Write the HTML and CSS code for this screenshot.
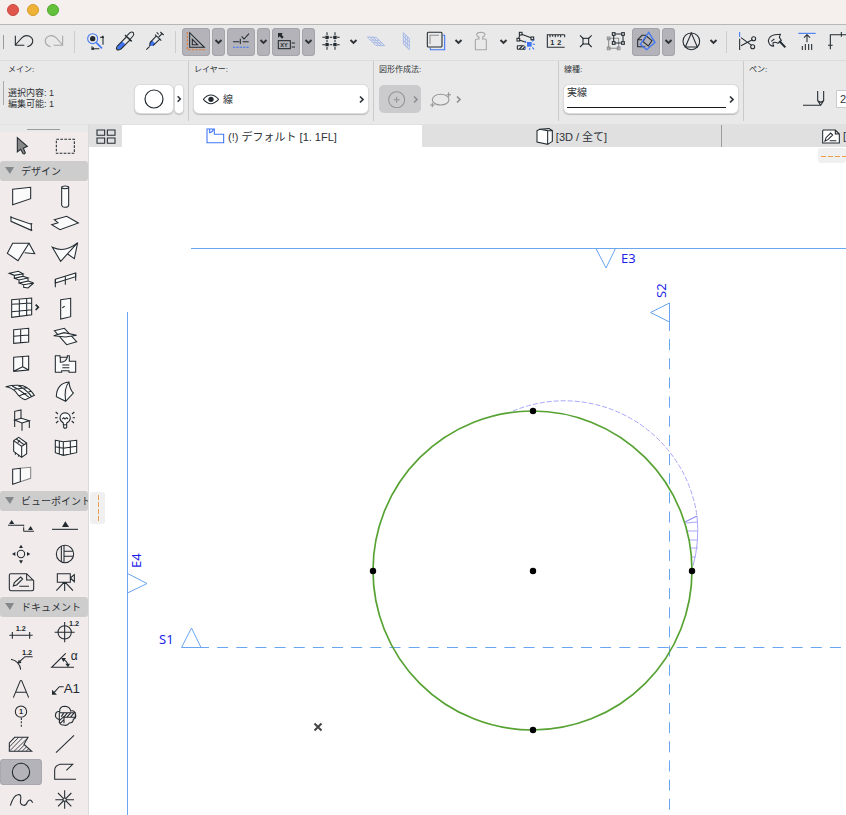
FILE: index.html
```html
<!DOCTYPE html>
<html lang="ja">
<head>
<meta charset="utf-8">
<title>平面図</title>
<link rel="stylesheet" href="styles.css">
</head>
<body>
<svg class="defs" aria-hidden="true">
  <defs>
    <symbol id="down" viewBox="0 0 24 24"><path d="M4 8l8 8 8-8" fill="none" stroke="currentColor" stroke-width="5"/></symbol>
    <symbol id="next" viewBox="0 0 24 24"><path d="M8 4l8 8-8 8" fill="none" stroke="currentColor" stroke-width="4.5"/></symbol>
  </defs>
</svg>

<header class="titlebar">
  <button class="light light-red" aria-label="閉じる"></button>
  <button class="light light-yellow" aria-label="しまう"></button>
  <button class="light light-green" aria-label="拡大"></button>
</header>

<nav class="toolbar">
  <span class="grip"></span>
  <button class="tool" aria-label="取り消し"><svg viewBox="30 84 84 84"><path d="M46 107V136H73M46 135L66 113Q75 104 87 108Q100 114 98 126Q95 137 82 140"/></svg></button>
  <button class="tool off" aria-label="やり直し"><svg viewBox="120 84 84 84"><path d="M188 107V136H161M188 135L168 113Q159 104 147 108Q134 114 136 126Q139 137 152 140"/></svg></button>
  <span class="sep"></span>
  <button class="tool" aria-label="検索と選択"><svg viewBox="243 84 84 84"><g class="blue"><circle cx="278" cy="116" r="15"/><path d="M289 128L306 145" stroke-width="5"/></g><circle class="ink" cx="278" cy="116" r="8"/><path d="M300 112H312M309 112V134M277 146H298M276 139V150"/><path class="ink" d="M274 146l8-5v10zM309 106l-6 7h9z"/></svg></button>
  <button class="tool" aria-label="スポイト"><svg viewBox="333 84 84 84"><path class="bluefill" d="M350 148L353 138L366 124L376 133L361 148Z"/><path d="M366 124L352 138Q347 146 351 149Q355 151 363 147L391 119M366 124L379 111M381 107L390 98Q396 94 400 98Q403 103 399 108L391 117"/><path d="M375 105L395 124" stroke-width="4.500"/></svg></button>
  <button class="tool" aria-label="注入"><svg viewBox="423 84 84 84"><path class="bluefill" d="M448 138L450 127L456 121L466 131L459 137Z"/><path d="M439 149L449 139M449 138L451 127L470 107M459 137L481 116M465 104L484 122M476 111L487 100M481 96L491 105M470 97L476 103"/></svg></button>
  <span class="sep"></span>
  <button class="tool on" aria-label="ガイド線"><svg viewBox="546 84 84 84"><path class="orange" d="M562 96V149H616" stroke-dasharray="7 4"/><path d="M569 98V142H613ZM577 118V134H593Z"/></svg></button>
  <button class="drop on" aria-label="ガイド線メニュー"><svg><use href="#down"/></svg></button>
  <button class="tool on" aria-label="スナップガイド"><svg viewBox="681 84 84 84"><path d="M699 125H718M728 125H746M721 116V132M725 109L732 117L747 101"/><path class="blue" d="M699 142H746" stroke-dasharray="7 3"/></svg></button>
  <button class="drop on" aria-label="スナップメニュー"><svg><use href="#down"/></svg></button>
  <button class="tool on" aria-label="座標"><svg viewBox="6 84 84 84"><path class="ink" d="M24 99H38L35 104L41 111L36 116L29 109L24 113Z"/><rect x="25" y="122" width="36" height="24"/><path d="M65 129H75M65 141H75"/><text x="31" y="140" class="t18">XY</text></svg></button>
  <button class="drop on" aria-label="座標メニュー"><svg><use href="#down"/></svg></button>
  <button class="tool" aria-label="グリッド"><svg viewBox="141 84 84 84"><path d="M157 112H209M157 134H209M171 97V149M195 97V149" stroke-dasharray="8 3"/><path class="ink" d="M166 107h10v10h-10zM190 107h10v10h-10zM166 129h10v10h-10zM190 129h10v10h-10z"/></svg></button>
  <button class="drop" aria-label="グリッドメニュー"><svg><use href="#down"/></svg></button>
  <button class="tool pale" aria-label="作業面"><svg viewBox="276 84 84 84"><path d="M292 111L319 112L344 137L317 136ZM301 120L328 121M309 128L336 129M301 111L326 136M310 112L335 137"/></svg></button>
  <button class="tool pale" aria-label="垂直面"><svg viewBox="366 84 84 84"><path d="M400 98L418 115V149L400 132ZM400 109L418 126M400 121L418 138M406 104V138M412 110V143"/></svg></button>
  <button class="tool" aria-label="トレース"><svg viewBox="456 84 84 84"><path class="blue" d="M518 106H524V149H481V143"/><rect x="472" y="97" width="44" height="44" rx="3"/><path class="grey" d="M480 132V106H507"/></svg></button>
  <button class="drop" aria-label="トレースメニュー"><svg><use href="#down"/></svg></button>
  <button class="tool off" aria-label="重り"><svg viewBox="591 84 84 84"><path d="M616 149V121Q616 117 621 117H627V111Q619 108 620 103Q622 97 633 97Q644 98 645 103Q645 109 638 111V117H645Q649 117 649 121V149Z"/></svg></button>
  <button class="drop" aria-label="重りメニュー"><svg><use href="#down"/></svg></button>
  <button class="tool" aria-label="要素情報"><svg viewBox="726 84 84 84"><path d="M751 101L787 115M745 119L768 127M750 103L745 118M787 115L786 122M742 137H763M742 148H766M742 137V148M747 148L757 138M757 148L766 139"/><g class="boxes"><rect x="748" y="97" width="8" height="8"/><rect x="741" y="115" width="8" height="8"/><rect x="783" y="111" width="8" height="8"/></g><path class="bluefill" d="M771 126h14v14h-14z"/><path class="blue" d="M764 123L769 127M787 124L793 119M788 133H795M787 142L792 148M779 144V150M768 142L764 147"/></svg></button>
  <button class="tool" aria-label="寸法測定"><svg viewBox="816 84 84 84"><path d="M884 104H832V142H884M840 104V112M848 104V110M856 104V112M864 104V110M872 104V112M884 104V112"/><text x="841" y="136" class="t22">1</text><text x="862" y="136" class="t22">2</text></svg></button>
  <button class="tool" aria-label="交点"><svg viewBox="66 84 84 84"><path d="M90 106L101 117M125 106L114 117M90 141L101 130M125 141L114 130"/><rect x="99" y="115" width="17" height="17"/></svg></button>
  <button class="tool" aria-label="編集平面"><svg viewBox="156 84 84 84"><g class="grey"><path d="M176 115H206V145H176Z"/><path d="M172 111h8v8h-8zM172 141h8v8h-8zM202 141h8v8h-8z"/></g><path d="M191 102H219V129H191Z"/><g class="boxes"><rect x="187" y="98" width="8" height="8"/><rect x="215" y="98" width="8" height="8"/><rect x="187" y="125" width="8" height="8"/><rect x="215" y="125" width="8" height="8"/></g></svg></button>
  <button class="tool on" aria-label="3D切断"><svg viewBox="246 84 84 84"><path d="M286 140H263V119L276 106H288M263 119H276M279 125L289 108L306 122L295 138Z"/><path class="blue" d="M271 133L296 97L315 127L290 149Z" stroke-width="4"/></svg></button>
  <button class="drop on" aria-label="3Dメニュー"><svg><use href="#down"/></svg></button>
  <button class="tool" aria-label="方位"><svg viewBox="381 84 84 84"><circle cx="424" cy="124" r="25"/><path d="M424 99L406 141H442Z"/></svg></button>
  <button class="drop" aria-label="方位メニュー"><svg><use href="#down"/></svg></button>
  <span class="sep"></span>
  <button class="tool" aria-label="分割"><svg viewBox="549 84 84 84"><path class="blue" d="M569 96V111"/><path d="M569 116V150M573 113L605 136M573 137L607 119"/><circle cx="611" cy="116" r="6"/><circle cx="608" cy="140" r="6"/></svg></button>
  <button class="tool" aria-label="調整"><svg viewBox="639 84 84 84"><path d="M655 122Q658 106 675 104L691 103L688 112L694 121L684 130Q674 124 669 129Q668 137 672 139Q657 139 655 122ZM664 124L673 117"/><path d="M688 123L706 142" stroke-width="6"/></svg></button>
  <button class="tool" aria-label="高さ調整"><svg viewBox="729 84 84 84"><path class="blue" d="M745 100H797"/><path d="M771 105V127M762 113L771 104L780 113M757 138V150M766 132V150M776 132V150M785 132V150"/></svg></button>
  <button class="tool" aria-label="コーナー"><svg viewBox="819 84 84 84"><path d="M841 148V104H888M834 136H848M874 96V110"/></svg></button>
</nav>

<section class="info">
  <div class="cell cell-main">
    <h2>メイン:</h2>
    <div class="row">
      <p class="counts">選択内容: 1<br>編集可能: 1</p>
      <button class="shape" aria-label="円"><svg viewBox="0 0 38 28"><circle cx="19" cy="14" r="9"/></svg></button>
      <button class="more" aria-label="設定"><svg><use href="#next"/></svg></button>
    </div>
  </div>
  <div class="cell">
    <h2><label for="layer">レイヤー:</label></h2>
    <div class="row field">
      <svg class="eye" viewBox="609 282 48 33"><path d="M610 298Q632 272 656 298Q632 324 610 298Z"/><circle class="ink" cx="633" cy="298" r="8"/></svg>
      <select id="layer"><option>線</option></select>
      <svg class="go"><use href="#next"/></svg>
    </div>
  </div>
  <div class="cell">
    <h2>図形作成法:</h2>
    <div class="row">
      <button class="method" aria-label="中心と半径" disabled><svg class="m1" viewBox="354 272 51 51"><circle cx="380" cy="298" r="24"/><path d="M371 298H389M380 289V307"/></svg><svg class="go"><use href="#next"/></svg></button>
      <button class="method plain" aria-label="楕円" disabled><svg class="m2" viewBox="480 272 66 51"><ellipse cx="512" cy="298" rx="25" ry="16"/><path d="M529 283H543M536 276V290M480 314H494M487 307V321"/></svg><svg class="go"><use href="#next"/></svg></button>
    </div>
  </div>
  <div class="cell">
    <h2><label for="ltype">線種:</label></h2>
    <div class="row field linetype">
      <select id="ltype"><option>実線</option></select>
      <svg class="go"><use href="#next"/></svg>
    </div>
  </div>
  <div class="cell cell-pen">
    <h2><label for="pen">ペン:</label></h2>
    <div class="row">
      <svg class="pen" viewBox="759 270 66 54"><path d="M759 316H810M803 273V302L812 316L821 302V273M803 302L812 307L821 302"/></svg>
      <input id="pen" type="text" value="2">
    </div>
  </div>
</section>

<div class="work">
  <aside class="palette">
    <div class="handle"></div>
    <div class="grid">
      <button aria-label="矢印"><svg viewBox="0 36 126 84"><path d="M52 53V96L62 88L69 101Q74 104 76 98L70 85L82 79Z" fill="#888"/></svg></button>
      <button aria-label="矩形選択"><svg viewBox="132 36 126 84"><rect x="169" y="58" width="54" height="42" stroke-dasharray="8 4"/></svg></button>
    </div>
    <h3><button>デザイン</button></h3>
    <div class="grid filled">
      <button aria-label="壁"><svg viewBox="0 186 126 84"><path d="M38 208L92 202V236L38 254Z"/></svg></button>
      <button aria-label="柱"><svg viewBox="132 186 126 84"><path d="M185 202V256Q187 262 195 262Q205 262 206 256V202"/><ellipse cx="195.500" cy="202" rx="10.500" ry="4"/></svg></button>
      <button aria-label="梁"><svg viewBox="0 270 126 84"><path d="M33 292L94 313V331L33 304ZM30 291H36M91 331H97M92 311H97" /></svg></button>
      <button aria-label="スラブ"><svg viewBox="132 270 126 84"><path d="M155 314L174 308L163 299L200 289L235 309L180 329Z"/></svg></button>
      <button aria-label="屋根"><svg viewBox="0 354 126 84"><path d="M38 370L22 400L54 422L87 370ZM87 370L104 401L74 398"/></svg></button>
      <button aria-label="シェル"><svg viewBox="132 354 126 84"><path d="M157 382Q195 400 233 368L182 424ZM233 368L223 416L203 402"/></svg></button>
      <button aria-label="階段"><svg viewBox="0 438 126 84"><path d="M28 460L55 454L69 461L43 466ZM43 466V475L69 469V461M43 475L57 480L84 474L69 469M57 480V489L84 483V474M57 489L71 494L101 489L84 483M71 494V502L84 504L101 489"/></svg></button>
      <button aria-label="手摺り"><svg viewBox="132 438 126 84"><path d="M166 478L227 459V470L166 489Z"/><path class="open" d="M166 478V502M227 459V482M196 469V494"/></svg></button>
      <button aria-label="カーテンウォール"><svg viewBox="0 522 126 84"><path d="M35 539L95 534V584L35 592ZM35 553L95 549M35 575L95 569M58 537V589M80 535V586"/><path class="open" d="M107 554L115 562L107 570" stroke-width="5"/></svg></button>
      <button aria-label="ドア"><svg viewBox="132 522 126 84"><path d="M182 539L212 535V590L182 597ZM187 563L194 559"/></svg></button>
      <button aria-label="窓"><svg viewBox="0 6 126 84"><path d="M41 29L86 25V66L41 70ZM41 49L86 45M62 27V68"/></svg></button>
      <button aria-label="天窓"><svg viewBox="132 6 126 84"><path d="M163 32L193 25L230 65L200 74Z"/><path d="M161 47L192 38L230 46L196 51Z"/></svg></button>
      <button aria-label="開口"><svg viewBox="0 90 126 84"><path d="M41 112L86 108V150L41 154ZM68 110V140L41 154M68 140L86 150"/></svg></button>
      <button aria-label="ゾーン"><svg viewBox="132 90 126 84"><path d="M166 107H180V112H202V107H208V124H227V157H207V152H185V157H166ZM181 112V127Q197 127 202 112M187 135H208M187 143H208"/></svg></button>
      <button aria-label="メッシュ"><svg viewBox="0 174 126 84"><path d="M17 200Q42 194 69 197Q89 204 103 226L76 239Q60 235 47 215Q35 202 17 200ZM36 198Q61 210 88 233M52 196Q78 207 95 230M42 208L80 203M58 227L94 213"/></svg></button>
      <button aria-label="モルフ"><svg viewBox="132 174 126 84"><path d="M169 230Q170 190 207 186Q209 208 220 219L197 244ZM207 186Q191 204 197 244"/></svg></button>
      <button aria-label="オブジェクト"><svg viewBox="0 258 126 84"><path d="M44 300L64 295L88 302L66 309Z"/><path class="open" d="M44 321V274L63 270V296M66 309V332M88 302V324"/></svg></button>
      <button aria-label="ランプ"><svg viewBox="132 258 126 84"><path d="M190 314V309Q180 303 180 294Q181 279 195 278Q210 279 211 294Q210 304 200 309V314ZM191 314V322Q195 328 200 322V314M187 297L191 293L195 297L200 293L204 297"/><path class="open" d="M167 276L174 282M223 276L216 282M165 293H173M218 293H225M168 309L175 303M222 309L215 303"/></svg></button>
      <button aria-label="設備"><svg viewBox="0 342 126 84"><path d="M41 362L56 352L80 369V401L65 412L41 394ZM41 362L65 379L80 369M65 379V412"/><path class="open" d="M49 357L72 374M53 368L60 361M46 397V404M56 404V410"/></svg></button>
      <button aria-label="カーテンパネル"><svg viewBox="132 342 126 84"><path d="M166 361L190 365L230 361V398L190 406L166 398ZM166 380L190 385L230 379M178 363V402M190 365V406M211 363V402"/></svg></button>
      <button aria-label="壁端部"><svg viewBox="0 426 126 84"><path d="M61 445L92 442V475L61 485" stroke="#888"/><path d="M38 448L61 445V485L38 493Z"/></svg></button>
    </div>
    <h3><button>ビューポイント</button></h3>
    <div class="grid">
      <button aria-label="断面図"><svg viewBox="0 81 126 84"><path d="M24 121H71V137M70 139H102" stroke-dasharray="50 3"/><path class="ink" d="M27 117L35 105L43 117ZM84 135L92 123L99 135Z"/></svg></button>
      <button aria-label="立面図"><svg viewBox="132 81 126 84"><path d="M156 133H234"/><path class="ink" d="M186 126L196 109L207 126Z"/></svg></button>
      <button aria-label="展開図"><svg viewBox="0 165 126 84"><circle cx="63" cy="207" r="11"/><path class="ink" d="M57 189L63 179L69 189ZM57 226L63 236L69 226ZM46 201L36 207L46 213ZM81 201L91 207L81 213Z"/></svg></button>
      <button aria-label="ワークシート"><svg viewBox="132 165 126 84"><circle cx="195" cy="207" r="26"/><path d="M184 183V231M192 182V232M192 199H219M192 214H219"/></svg></button>
      <button aria-label="詳細図"><svg viewBox="0 249 126 84"><path d="M32 266H80L101 287V311Q101 317 96 317H33Q28 317 28 311V271Q28 266 32 266ZM80 266V285H101M40 303L43 293L62 276L68 282L50 300ZM58 304H87"/></svg></button>
      <button aria-label="カメラ"><svg viewBox="132 249 126 84"><path d="M172 266H211V292H172ZM211 279L223 269V290ZM194 292V318M192 292L169 317M196 292L219 317"/></svg></button>
    </div>
    <h3><button>ドキュメント</button></h3>
    <div class="grid">
      <button aria-label="寸法"><svg viewBox="0 399 126 84"><path d="M28 451H98M37 441V461M89 441V461"/><text x="47" y="437" class="t20b">1.2</text></svg></button>
      <button aria-label="レベル寸法"><svg viewBox="132 399 126 84"><circle cx="194" cy="442" r="20"/><path d="M164 442H224M194 411V472"/><text x="207" y="422" class="t20b">1.2</text></svg></button>
      <button aria-label="半径寸法"><svg viewBox="0 18 126 84"><path d="M33 58Q59 64 62 89M54 69L75 50H98"/><path class="ink" d="M53 71L56 59L65 68Z"/><text x="66" y="44" class="t20b">1.2</text></svg></button>
      <button aria-label="角度寸法"><svg viewBox="132 18 126 84"><path d="M222 82H155L197 40M188 58Q202 62 204 78"/><path class="ink" d="M184 54l14 0-8 12zM196 71h14l-6 11z"/><text x="212" y="60" class="t32">α</text></svg></button>
      <button aria-label="テキスト"><svg viewBox="0 102 126 84"><path d="M40 173L61 122H65L86 173M46 157H80"/></svg></button>
      <button aria-label="ラベル"><svg viewBox="132 102 126 84"><path d="M160 160L178 140H191"/><path class="ink" d="M156 164V149L171 164Z"/><text x="191" y="158" class="t40">A1</text></svg></button>
      <button aria-label="通り芯"><svg viewBox="0 186 126 84"><circle cx="63" cy="215" r="17"/><path d="M64 234V260" stroke-dasharray="6 4"/><text x="57" y="223" class="t20b">1</text></svg></button>
      <button aria-label="変更"><svg viewBox="132 186 126 84"><path d="M178 239Q163 234 167 222Q169 213 179 215Q178 199 195 199Q210 200 212 213Q225 209 227 225Q229 234 220 238Q220 249 208 249Q201 259 191 255Q178 257 178 239ZM178 218H226V232H192V250M178 218V248M184 230L192 218M190 233L203 218M200 232L213 218M211 232L223 218M179 241L192 229M181 250L192 239"/></svg></button>
      <button aria-label="塗りつぶし"><svg viewBox="0 270 126 84"><path d="M28 334V309L44 292H84L72 313L95 334Z"/><path d="M28 321L56 292M30 332L69 292M42 334L80 297M54 334L73 315M66 334L79 321M78 334L86 326" stroke-width="2.500"/></svg></button>
      <button aria-label="線"><svg viewBox="132 270 126 84"><path d="M168 338L222 286"/></svg></button>
      <button class="picked" aria-label="円弧/円"><svg viewBox="0 354 126 84"><circle cx="63" cy="396" r="26"/></svg></button>
      <button aria-label="ポリライン"><svg viewBox="132 354 126 84"><path d="M199 391L218 373H181Q164 377 164 391V418H228"/></svg></button>
      <button aria-label="スプライン"><svg viewBox="0 438 126 84"><path d="M31 497Q41 464 54 464Q65 462 62 478Q58 494 71 496Q78 497 82 486Q91 473 98 488"/></svg></button>
      <button aria-label="ホットスポット"><svg viewBox="132 438 126 84"><path d="M166 479H189M199 479H222M194 451V474M194 484V506M174 459L190 475M214 459L198 475M174 499L190 483M214 499L198 483"/><circle cx="194" cy="479" r="5"/></svg></button>
    </div>
  </aside>

  <main class="view">
    <nav class="tabs">
      <button class="overview" aria-label="タブ一覧"><svg viewBox="286 386 60 45"><path d="M289 389H312V405H289ZM320 389H343V405H320ZM289 413H312V429H289ZM320 413H343V429H320Z"/></svg></button>
      <button class="tab active"><svg class="plan" viewBox="623 383 57 48"><path class="blue" d="M626 427V386H648V402H676V427ZM634 386V397Q643 396 645 386"/></svg>(!) デフォルト [1. 1FL]</button>
      <button class="tab"><svg class="box3d" viewBox="796 383 51 51"><path d="M799 391L807 387L831 391V432L799 425ZM807 387L835 385L845 391V423L831 432M831 391L845 391" fill="#fff"/></svg>[3D / 全て]</button>
      <button class="tab last" aria-label="詳細図"><svg class="sheet" viewBox="819 386 54 45"><path d="M823 389H859L871 401V428H821V392ZM859 389V401H871M828 422L831 412L845 398L851 404L837 418ZM842 421H862" fill="#fff"/></svg>[</button>
    </nav>
    <div class="canvas">
      <svg class="drawing" aria-label="平面図">
        <g transform="translate(-89 -147)">
          <g class="marker">
            <path d="M191 248.500H4000M127.500 312V4000"/>
            <path d="M669.500 320V4000M198 647.500H4000" stroke-dasharray="11 8.150"/>
            <path d="M596 248.500L606 268L615.500 248.500M669.500 303V322L650.500 312.500L669.500 303M127.500 573.500L147 583.500L127.500 593M191.500 628L181.500 647.500H201Z"/>
          </g>
          <g class="tag">
            <text x="621" y="263">E3</text>
            <text x="159" y="644">S1</text>
            <text transform="translate(666 298) rotate(-90)">S2</text>
            <text transform="translate(141 568) rotate(-90)">E4</text>
          </g>
          <path class="swing" d="M513 411A134 134 0 0 1 697 516" stroke-dasharray="5 2"/>
          <path class="swing" d="M697 516A135 135 0 0 1 693 566M686 523L698 522M687 531H698M689 540H698M690 548H698M691 557H696"/>
          <path class="hinge" d="M697 516L685 522"/>
          <circle class="circle" cx="532.500" cy="570.500" r="159.500"/>
          <g class="node">
            <circle cx="533" cy="411" r="3.200"/><circle cx="373" cy="571" r="3.200"/><circle cx="533" cy="571" r="3.200"/><circle cx="692" cy="571" r="3.200"/><circle cx="533" cy="730" r="3.200"/>
          </g>
          <path class="cross" d="M314.500 723.500L321.500 730.500M321.500 723.500L314.500 730.500"/>
        </g>
      </svg>
      <div class="dock dock-left"></div>
      <div class="dock dock-top"></div>
    </div>
  </main>
</div>
</body>
</html>
```
FILE: styles.css
```css
* { box-sizing: border-box; }

body {
  margin: 0;
  height: 100vh;
  display: flex;
  flex-direction: column;
  overflow: hidden;
  background: #fff;
  color: #2f3337;
  font-family: "Liberation Sans", "Noto Sans CJK JP", sans-serif;
  font-size: 11px;
}

button, select, input {
  font: inherit;
  color: inherit;
  border: 0;
  padding: 0;
  margin: 0;
  background: none;
}

h2, h3, p { margin: 0; font-weight: 400; }

svg {
  display: block;
  flex: none;
  fill: none;
  stroke: #232b31;
  stroke-width: 3.2;
}

svg text { fill: #232b31; stroke: none; font-family: "Liberation Sans", sans-serif; }
.defs { position: absolute; width: 0; height: 0; }
.ink { fill: #232b31; stroke: none; }
.blue { stroke: #3f75f5; }
.bluefill { fill: #3f75f5; stroke: none; }
.orange { stroke: #e8772e; }
.grey { stroke: #8d8f91; }
.boxes { fill: #e9e9e9; }
.t18 { font-size: 17px; font-weight: 700; }
.t20b { font-size: 22px; font-weight: 700; }
.t22 { font-size: 22px; font-weight: 700; }
.t32 { font-size: 36px; }
.t40 { font-size: 40px; }

/* Window bar */
.titlebar {
  flex: none;
  display: flex;
  align-items: center;
  gap: 8px;
  height: 25px;
  padding: 0 7px 5px;
  background: #f5f0ed;
  border-bottom: 1px solid #bab8b6;
}
.light { width: 12px; height: 12px; border-radius: 50%; }
.light-red { background: #e0564c; border: 1px solid #c8483f; }
.light-yellow { background: #eeb236; border: 1px solid #d59c2b; }
.light-green { background: #63c13c; border: 1px solid #51a72d; }

/* Toolbar */
.toolbar {
  flex: none;
  display: flex;
  align-items: center;
  height: 36px;
  padding-bottom: 2px;
  overflow: hidden;
  background: #e9e9e9;
  border-bottom: 1px solid #dcdcdc;
}
.grip { flex: none; width: 1px; height: 14px; margin: 0 5px 0 3px; background: #999; }
.tool { flex: none; width: 28px; height: 28px; margin: 0 1px; border-radius: 4px; }
.tool svg { width: 28px; height: 28px; }
.drop {
  flex: none;
  display: flex;
  align-items: center;
  justify-content: center;
  width: 13px;
  height: 28px;
  margin: 0 1px;
  border-radius: 4px;
}
.drop svg { width: 9px; height: 9px; }
.on { background: #b4b3b9; box-shadow: inset 0 0 0 1px #a5a4aa; }
.off svg { stroke: #a6a6a6; }
.pale svg { stroke: #a5b8e6; stroke-width: 3; }
.sep { flex: none; width: 1px; height: 22px; margin: 0 5px; background: #cdcdcd; }

/* Info box */
.info {
  flex: none;
  display: flex;
  height: 64px;
  overflow: hidden;
  background: #e9e9e9;
  border-bottom: 1px solid #e1e1e1;
}
.cell {
  flex: none;
  width: 185px;
  height: 60px;
  padding: 0 4px 0 5px;
  border-left: 1px solid #cacaca;
}
.cell-main {
  width: 188px;
  padding: 0 5px 0 8px;
  border-left: 0;
  background: linear-gradient(#a9a9a9, #a9a9a9) 3px 20px / 1px 24px no-repeat;
}
.cell-pen { flex: 1 0 185px; }
.cell h2 { height: 18px; margin-bottom: 6px; font-size: 8px; line-height: 18px; }
.row { display: flex; align-items: center; height: 28px; }
.counts { flex: 1; font-size: 9px; line-height: 11px; }
.shape, .more, .field {
  background: #fff;
  border-radius: 5px;
  box-shadow: 0 0 0 1px #dadada, 0 1px 1px 1px #bcbcbc;
}
.shape { width: 38px; height: 28px; }
.shape svg { width: 38px; height: 28px; stroke-width: 1.2; }
.more { width: 8px; height: 28px; margin-left: 2px; }
.more svg { width: 8px; height: 8px; }
.go { width: 9px; height: 9px; }
.field { width: 174px; padding: 0 2px 0 9px; font-size: 10px; }
.eye { width: 16px; height: 11px; }
.field select { flex: 1; min-width: 0; height: 28px; margin-left: 4px; appearance: none; }
.field.linetype { padding-left: 3px; }
.field.linetype select {
  align-self: flex-start;
  height: 23px;
  margin: 0 1px 0 0;
  padding-bottom: 7px;
  border-bottom: 1px solid #1b1b1b;
}
.method {
  display: flex;
  align-items: center;
  gap: 6px;
  width: 42px;
  height: 28px;
  padding-left: 9px;
  border-radius: 5px;
  background: #cbcbcd;
  color: #8e8f91;
}
.method svg { stroke: #939496; }
.method.plain { background: none; gap: 2px; }
.m1 { width: 17px; height: 17px; }
.m2 { width: 22px; height: 17px; }
.pen { width: 22px; height: 18px; margin: 0 11px 0 54px; }
#pen { flex: 1; height: 18px; padding-left: 3px; background: #fff; border: 1px solid #ccc; }

/* Tool palette */
.work { flex: 1; min-height: 0; display: flex; }
.palette {
  flex: none;
  width: 89px;
  overflow: hidden;
  background: #f1ebeb;
  border-right: 1px solid #dfdada;
}
.handle {
  height: 7px;
  background: linear-gradient(#9b9b9b, #9b9b9b) 27px 4px / 33px 1px no-repeat, #e9e9e9;
}
.grid { display: grid; grid-template-columns: 42px 42px; column-gap: 2px; grid-auto-rows: 28px; }
.grid svg { width: 42px; height: 28px; }
.filled svg { fill: #fbfbfb; }
.filled svg .open { fill: none; }
.picked {
  height: 26px;
  align-self: center;
  border-radius: 4px;
  background: #b4b3b9;
  box-shadow: inset 0 0 0 1px #a9a8ae;
}
.picked svg { margin-top: -1px; }
.palette h3 { margin: 1px 0; font-size: 10px; }
.palette h3 button {
  display: flex;
  align-items: center;
  gap: 7px;
  width: 88px;
  height: 20px;
  padding: 0 0 1px 5px;
  white-space: nowrap;
  text-align: left;
  border-radius: 3px;
  background: #cecdcd;
}
.palette h3 button::before {
  content: "";
  flex: none;
  border: solid transparent;
  border-width: 7px 4px 0 5px;
  border-top-color: #85888a;
}

/* Tabs */
.view { flex: 1; min-width: 0; display: flex; flex-direction: column; }
.tabs { flex: none; display: flex; height: 22px; overflow: hidden; background: #e0e0e0; }
.overview { flex: none; width: 33px; padding-left: 7px; }
.overview svg { width: 20px; height: 15px; }
.tab {
  flex: none;
  display: flex;
  align-items: center;
  justify-content: center;
  gap: 3px;
  width: 300px;
  border-right: 1px solid #9c9c9c;
}
.tab.active { background: #fff; border-right-color: #fff; }
.tab.last { justify-content: flex-start; padding-left: 100px; }
.plan { width: 19px; height: 16px; }
.box3d { width: 17px; height: 17px; }
.sheet { width: 18px; height: 15px; }

/* Drawing area */
.canvas { flex: 1; min-height: 0; position: relative; background: #fff; }
.drawing { width: 100%; height: 100%; stroke-width: 1; }
.marker { stroke: #69a6f2; }
.drawing .tag text { fill: #1f1fe8; font-family: "Noto Sans", sans-serif; font-size: 13px; }
.swing { stroke: #aaa7fa; }
.hinge { stroke: #7774ee; }
.circle { stroke: #56a232; stroke-width: 1.700; }
.node { fill: #000; stroke: none; }
.cross { stroke: #444; stroke-width: 2; }
.dock { position: absolute; background-color: #f0f0f0; border-radius: 3px; }
.dock-left {
  left: 1px;
  top: 345px;
  width: 15px;
  height: 32px;
  background-image: repeating-linear-gradient(#f09c4b 0 5px, transparent 5px 7px);
  background-position: 8px 3px;
  background-size: 1px 26px;
  background-repeat: no-repeat;
}
.dock-top {
  right: 0;
  top: 1px;
  width: 28px;
  height: 15px;
  background-image: repeating-linear-gradient(90deg, #f09c4b 0 5px, transparent 5px 7px);
  background-position: 3px 8px;
  background-size: 26px 1px;
  background-repeat: no-repeat;
}
```
